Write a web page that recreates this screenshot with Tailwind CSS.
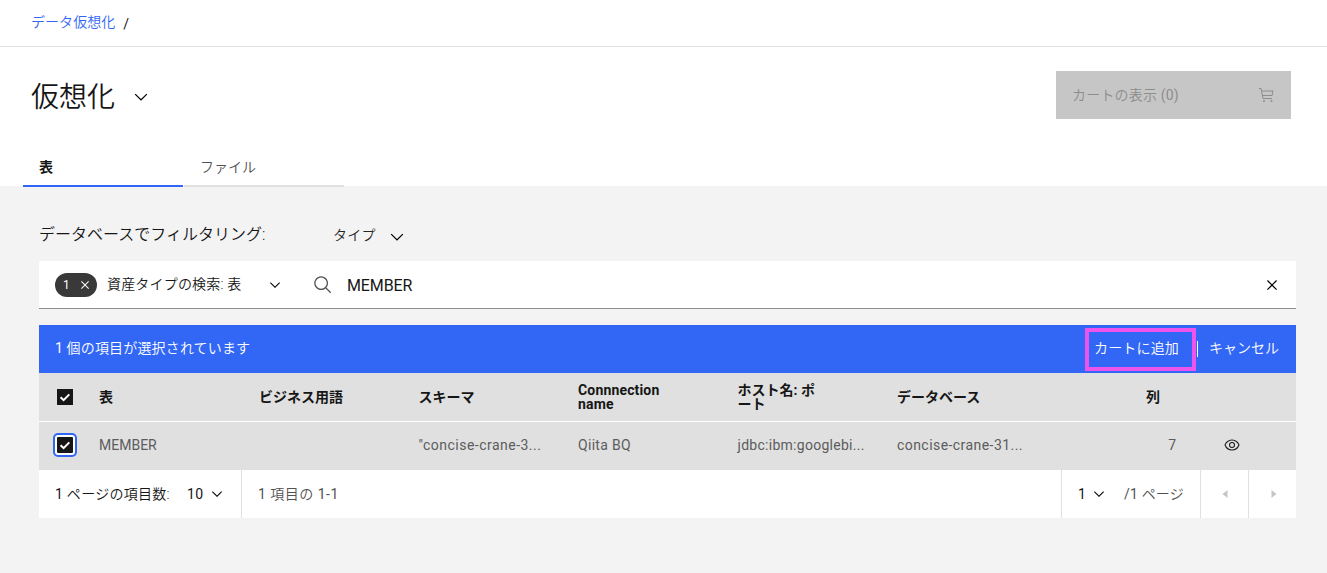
<!doctype html>
<html lang="ja">

<head>
  <meta charset="UTF-8" />
  <meta name="viewport" content="width=device-width, initial-scale=1.0" />
  <script src="https://cdn.jsdelivr.net/npm/@tailwindcss/browser@4"></script>
  <title>仮想化</title>
</head>

<body class="h-[573px] overflow-hidden bg-[#f3f3f3] font-['Roboto','Noto_Sans_CJK_JP',sans-serif] text-sm font-[350] text-[#161616]">
  <svg class="hidden">
    <symbol id="chevron" viewBox="0 0 16 16"><path d="M8 11L3 6 3.7 5.3 8 9.6 12.3 5.3 13 6z" /></symbol>
    <symbol id="close" viewBox="0 0 32 32"><path d="M24 9.4 22.6 8 16 14.6 9.4 8 8 9.4 14.6 16 8 22.6 9.4 24 16 17.4 22.6 24 24 22.6 17.4 16z" /></symbol>
    <symbol id="check" viewBox="0 0 16 16"><path d="M3.6 8.2 6.6 11.2 12.3 5.4" fill="none" stroke="#fff" stroke-width="2" /></symbol>
  </svg>

  <div class="h-[186px] bg-white">
    <nav class="flex h-[47px] items-center gap-2 border-b border-[#e0e0e0] pl-[31px] leading-[18px]">
      <a class="pb-0.5 text-[#3267f5] tracking-[0.05px]">データ仮想化</a>
      <span class="pt-0.5 font-normal">/</span>
    </nav>
    <header class="flex h-[97px] items-center justify-between pl-[31px] pr-9">
      <div class="flex items-center gap-4">
        <h1 class="pt-1 text-[28px] leading-9 font-[350]">仮想化</h1>
        <svg class="mt-0.5 h-5 w-5"><use href="#chevron" /></svg>
      </div>
      <button class="mb-0.5 flex h-12 w-[235px] items-center justify-between bg-[#c6c6c6] pr-4 pl-4 text-[#8d8d8d]">
        <span class="tracking-[0.2px]">カートの表示 <span class="font-normal">(0)</span></span>
        <svg class="h-4 w-4 fill-current" viewBox="0 0 32 32">
          <circle cx="10" cy="28" r="2" /><circle cx="25" cy="28" r="2" />
          <path d="M28,7H5.82L5,2.8A1,1,0,0,0,4,2H0V4H3.18L7,23.2A1,1,0,0,0,8,24H26V22H8.82L8,18H26a1,1,0,0,0,1-.78l2-9A1,1,0,0,0,28,7ZM25.2,16H7.62l-1.4-7H26.75Z" />
        </svg>
      </button>
    </header>
    <div class="flex h-[43px] gap-px pt-1 pl-[23px]">
      <div class="flex h-[39px] w-40 items-center border-b-2 border-[#3267f5] pt-px pl-4 font-bold">表</div>
      <div class="flex h-[39px] w-40 items-center border-b-2 border-[#e0e0e0] pt-px pl-4 text-[#525252]">ファイル</div>
    </div>
  </div>

  <main class="pr-[31px] pl-[39px]">
    <div class="flex h-[75px] items-center pt-[23px]">
      <span class="w-[294px] text-base leading-6">データベースでフィルタリング:</span>
      <span class="w-14 text-[#262626] tracking-[0.2px]">タイプ</span>
      <svg class="mt-[3px] h-4 w-4 scale-125"><use href="#chevron" /></svg>
    </div>

    <div class="flex h-12 items-center border-b border-[#8d8d8d] bg-white pl-4">
      <div class="flex h-6 w-[42px] items-center justify-between rounded-full bg-[#393939] pr-1 pl-2 text-xs font-normal text-white">
        <span>1</span>
        <svg class="h-4 w-4 fill-current"><use href="#close" /></svg>
      </div>
      <span class="ml-2.5 w-40 pb-px tracking-[0.18px]">資産タイプの検索: 表</span>
      <svg class="h-4 w-4"><use href="#chevron" /></svg>
      <svg class="ml-[30px] h-5 w-5 fill-[#525252]" viewBox="0 0 32 32">
        <path d="M29,27.5859l-7.5521-7.5521a11.0177,11.0177,0,1,0-1.4141,1.4141L27.5859,29ZM4,13a9,9,0,1,1,9,9A9.01,9.01,0,0,1,4,13Z" />
      </svg>
      <span class="ml-[14px] pt-0.5 text-base font-normal tracking-[-0.1px]">MEMBER</span>
      <svg class="mr-[14px] ml-auto h-5 w-5"><use href="#close" /></svg>
    </div>

    <!-- batch actions -->
    <div class="mt-4 flex h-12 items-center bg-[#3267f5] pl-4 text-white">
      <span class="pb-0.5 tracking-[0.16px]"><span class="font-normal">1</span> 個の項目が選択されています</span>
      <button class="ml-auto flex h-[43px] w-[111px] items-center border-4 border-[#ee53ee] pl-[5px]"><span class="-mt-0.5 tracking-[0.16px]">カートに追加</span></button>
      <span class="ml-px h-4 w-px bg-white"></span>
      <button class="w-[98px] pb-0.5 pl-[11px] text-left">キャンセル</button>
    </div>

    <div class="grid h-12 grid-cols-[60px_160px_159.5px_159.5px_159.5px_159.5px_249px_1fr] items-center bg-[#e0e0e0] leading-[14px] font-bold">
      <svg class="ml-[18px] h-4 w-4 bg-[#161616]"><use href="#check" /></svg>
      <span>表</span>
      <span>ビジネス用語</span>
      <span>スキーマ</span>
      <span class="tracking-[0.16px]">Connnection<br>name</span>
      <span>ホスト名: ポ<br>ート</span>
      <span>データベース</span>
      <span>列</span>
    </div>
    <div class="grid h-[49px] grid-cols-[60px_160px_159.5px_159.5px_159.5px_159.5px_249px_1fr] items-center border-t border-white bg-[#e0e0e0] pb-0.5 font-normal text-[#5c5c5c]">
      <svg class="ml-[18px] h-4 w-4 rounded-[1px] bg-[#161616] outline-2 outline-offset-2 outline-[#3267f5] ring-2 ring-white"><use href="#check" /></svg>
      <span>MEMBER</span>
      <span></span>
      <span class="tracking-[0.48px]">"concise-crane-3...</span>
      <span class="tracking-[0.3px]">Qiita BQ</span>
      <span class="tracking-[0.28px]">jdbc:ibm:googlebi...</span>
      <span class="tracking-[0.44px]">concise-crane-31...</span>
      <div class="flex items-center">
        <span class="w-[30px] text-right">7</span>
        <svg class="ml-12 h-4 w-4 fill-[#161616]" viewBox="0 0 32 32">
          <path d="M30.94,15.66A16.69,16.69,0,0,0,16,5,16.69,16.69,0,0,0,1.06,15.66a1,1,0,0,0,0,.68A16.69,16.69,0,0,0,16,27,16.69,16.69,0,0,0,30.94,16.34,1,1,0,0,0,30.94,15.66ZM16,25c-5.3,0-10.9-3.93-12.93-9C5.1,10.93,10.7,7,16,7s10.9,3.93,12.93,9C26.9,21.07,21.3,25,16,25Z" />
          <path d="M16,10a6,6,0,1,0,6,6A6,6,0,0,0,16,10Zm0,10a4,4,0,1,1,4-4A4,4,0,0,1,16,20Z" />
        </svg>
      </div>
    </div>

    <!-- pagination -->
    <div class="flex h-12 items-stretch bg-white">
      <div class="flex w-[203px] items-center border-r border-[#e0e0e0] pl-4">
        <span class="w-[132px] tracking-[0.28px]"><span class="font-normal">1</span> ページの項目数:</span>
        <span class="w-[22px] font-normal tracking-[0.4px]">10</span>
        <svg class="h-4 w-4"><use href="#chevron" /></svg>
      </div>
      <div class="flex items-center pl-4 text-[#525252] tracking-[0.5px]">
        <span><span class="font-normal">1</span> 項目の <span class="font-normal">1-1</span></span>
      </div>
      <div class="ml-auto flex w-[140px] items-center border-x border-[#e0e0e0] pl-4">
        <span class="w-[13px] font-normal">1</span>
        <svg class="h-4 w-4"><use href="#chevron" /></svg>
        <span class="ml-[17px] text-[#525252] tracking-[0.2px]"><span class="font-normal">/1</span> ページ</span>
      </div>
      <div class="flex w-12 items-center justify-center border-r border-[#e0e0e0]">
        <svg class="h-4 w-4 fill-[#c6c6c6]" viewBox="0 0 16 16"><path d="M5.5 8 10.5 4v8z" /></svg>
      </div>
      <div class="flex w-[47px] items-center justify-center pl-0.5">
        <svg class="h-4 w-4 fill-[#c6c6c6]" viewBox="0 0 16 16"><path d="M10.5 8 5.5 4v8z" /></svg>
      </div>
    </div>
  </main>
</body>

</html>
